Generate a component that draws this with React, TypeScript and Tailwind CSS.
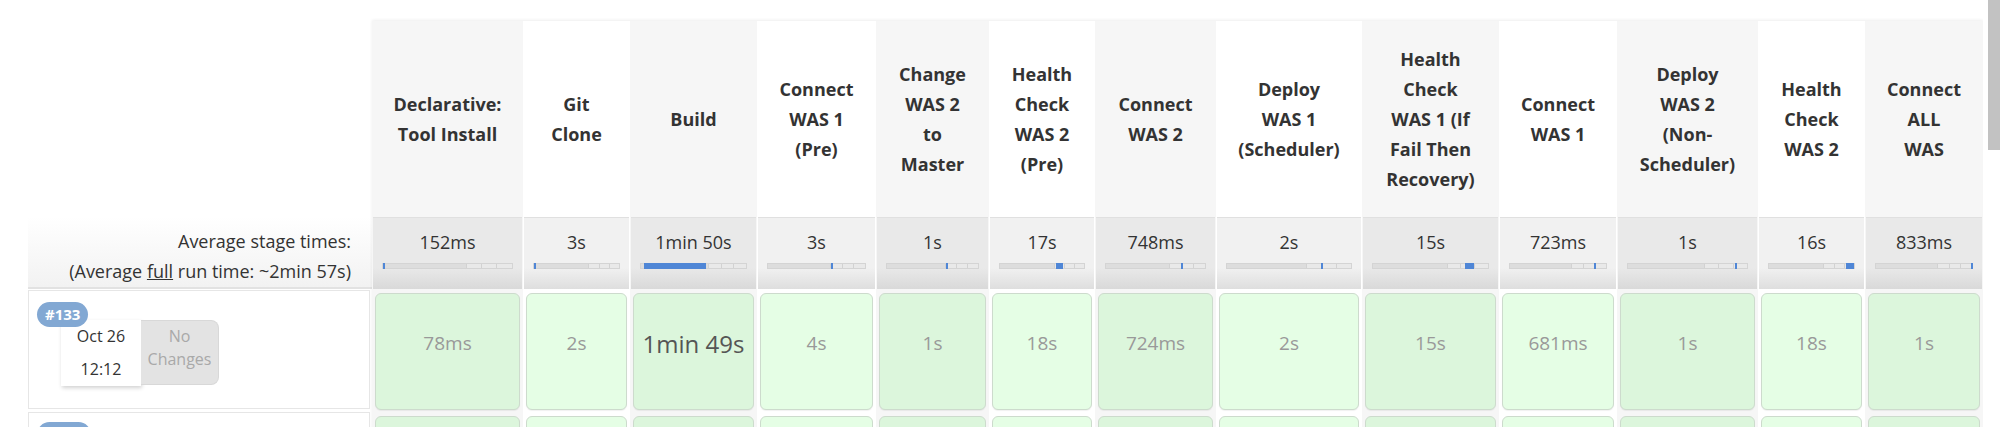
import React from 'react';

interface Stage {
  name: string[];
  avg: string;
  time: string;
  width: number;
  marker: [number, number]; // left %, width %
  big?: boolean;
}

const stages: Stage[] = [
  { name: ['Declarative:', 'Tool Install'], avg: '152ms', time: '78ms', width: 151, marker: [0, 1.2] },
  { name: ['Git', 'Clone'], avg: '3s', time: '2s', width: 107, marker: [0, 1.5] },
  { name: ['Build'], avg: '1min 50s', time: '1min 49s', width: 127, marker: [3, 59], big: true },
  { name: ['Connect', 'WAS 1', '(Pre)'], avg: '3s', time: '4s', width: 119, marker: [64.5, 1.5] },
  { name: ['Change', 'WAS 2', 'to', 'Master'], avg: '1s', time: '1s', width: 113, marker: [65, 1.5] },
  { name: ['Health', 'Check', 'WAS 2', '(Pre)'], avg: '17s', time: '18s', width: 106, marker: [67, 8] },
  { name: ['Connect', 'WAS 2'], avg: '748ms', time: '724ms', width: 121, marker: [76, 1.5] },
  { name: ['Deploy', 'WAS 1', '(Scheduler)'], avg: '2s', time: '2s', width: 146, marker: [76, 1.2] },
  { name: ['Health', 'Check', 'WAS 1 (If', 'Fail Then', 'Recovery)'], avg: '15s', time: '15s', width: 137, marker: [80, 8] },
  { name: ['Connect', 'WAS 1'], avg: '723ms', time: '681ms', width: 118, marker: [88, 1.5] },
  { name: ['Deploy', 'WAS 2', '(Non-', 'Scheduler)'], avg: '1s', time: '1s', width: 141, marker: [89.5, 1.5] },
  { name: ['Health', 'Check', 'WAS 2'], avg: '16s', time: '18s', width: 107, marker: [90, 10] },
  { name: ['Connect', 'ALL', 'WAS'], avg: '833ms', time: '1s', width: 118, marker: [98.5, 1.5] },
];

function TimeBar({ marker }: { marker: [number, number] }) {
  return (
    <div className="relative mx-[9px] h-[6px] flex border border-[#d4d4d4] bg-[#dedede]">
      <div className="w-[64%] bg-[#dddddd]" />
      <div className="w-[12%] bg-[#e9e9e9] border-l border-[#d2d2d2]" />
      <div className="w-[12%] bg-[#e9e9e9] border-l border-[#d2d2d2]" />
      <div className="w-[12%] bg-[#e9e9e9] border-l border-[#d2d2d2]" />
      <div
        className="absolute top-[-1px] bottom-[-1px] bg-[#4f86d6]"
        style={{ left: `${marker[0]}%`, width: `${marker[1]}%`, minWidth: 2 }}
      />
    </div>
  );
}

function StageColumn({ stage, shaded }: { stage: Stage; shaded: boolean }) {
  return (
    <div
      className={`flex flex-col shrink-0 ${shaded ? 'bg-[#f6f6f6]' : 'bg-white'}`}
      style={{ width: stage.width }}
    >
      <div className="h-[196px] flex flex-col items-center justify-center font-bold text-[18px] leading-[30px] text-[#333]">
        {stage.name.map((line) => (
          <span key={line} className="whitespace-nowrap">{line}</span>
        ))}
      </div>

      <div
        className={`h-[72px] mx-[1px] border-t border-[#e0e0e0] pt-[9px] ${
          shaded
            ? 'bg-[linear-gradient(to_bottom,#e9e9e9_70%,#d9d9d9)]'
            : 'bg-[linear-gradient(to_bottom,#f1f1f1_70%,#dedede)]'
        }`}
      >
        <div className="text-center text-[18px] leading-[30px] text-[#333]">{stage.avg}</div>
        <div className="mt-[6px]">
          <TimeBar marker={stage.marker} />
        </div>
      </div>

      <div className="h-[124px] px-[3px] pt-[4px] pb-[3px]">
        <div
          className={`h-full rounded-[6px] border border-[#cddbcd] shadow-[0_1px_1px_rgba(0,0,0,0.06)] flex items-center justify-center pb-[16px] ${
            shaded ? 'bg-[#dcf6dc]' : 'bg-[#e5fee5]'
          }`}
        >
          <span className={stage.big ? 'text-[24px] text-[#555]' : 'text-[19px] text-[#999]'}>
            {stage.time}
          </span>
        </div>
      </div>

      <div className="h-[124px] px-[3px] pt-[3px]">
        <div
          className={`h-full rounded-[6px] border border-[#cddbcd] ${
            shaded ? 'bg-[#dcf6dc]' : 'bg-[#e5fee5]'
          }`}
        />
      </div>
    </div>
  );
}

function BuildRow({ num, date, time }: { num: string; date: string; time: string }) {
  return (
    <div className="relative h-[119px] mt-[1px] mr-[2px] border border-[#e6e6e6] bg-white pl-[32px] pt-[29px]">
      <div className="flex">
        <div className="w-[80px] h-[66px] bg-white shadow-[1px_2px_4px_rgba(0,0,0,0.18)] flex flex-col items-center justify-center text-[16px] leading-[33px] text-[#333]">
          <span>{date}</span>
          <span>{time}</span>
        </div>
        <div className="w-[78px] h-[65px] bg-[#e3e3e3] rounded-r-[8px] border border-l-0 border-[#d8d8d8] flex flex-col items-center justify-center pb-[10px] text-[16px] leading-[23px] text-[#a9a9a9]">
          <span>No</span>
          <span>Changes</span>
        </div>
      </div>
      <span className="absolute left-[8px] top-[11px] h-[25px] px-[8px] rounded-full bg-[#82a8d3] text-white font-bold text-[15px] leading-[25px]">
        {num}
      </span>
    </div>
  );
}

export default function App() {
  return (
    <div className="w-[2000px] h-[427px] overflow-hidden bg-white flex font-['Open_Sans','Noto_Sans',sans-serif]">
      <div className="flex-1 pt-[21px] pl-[28px] overflow-hidden">
        <div className="flex">
          {/* left column */}
          <div className="w-[344px] shrink-0 flex flex-col">
            <div className="h-[196px]" />
            <div className="h-[72px] bg-[linear-gradient(to_bottom,#ffffff,#f2f2f2)] border-b-2 border-[#e2e2e2] pr-[21px] pt-[9px] flex flex-col items-end text-[18px] leading-[30px] text-[#333]">
              <span>Average stage times:</span>
              <span>
                (Average <span className="underline">full</span> run time: ~2min 57s)
              </span>
            </div>
            <BuildRow num="#133" date="Oct 26" time="12:12" />
            <div className="relative h-[124px] mt-[3px] mr-[2px] border border-[#e6e6e6] bg-white">
              <span className="absolute left-[8px] top-[9px] h-[25px] w-[54px] rounded-full bg-[#82a8d3]" />
            </div>
          </div>

          {/* stage columns */}
          <div className="flex shadow-[0_-1px_3px_rgba(0,0,0,0.07)]">
            {stages.map((s, i) => (
              <StageColumn key={s.name.join(' ')} stage={s} shaded={i % 2 === 0} />
            ))}
          </div>
        </div>
      </div>

      {/* scrollbar */}
      <div className="w-[17px] shrink-0 bg-white pl-[5px]">
        <div className="h-[150px] bg-[#c2c2c2]" />
      </div>
    </div>
  );
}
